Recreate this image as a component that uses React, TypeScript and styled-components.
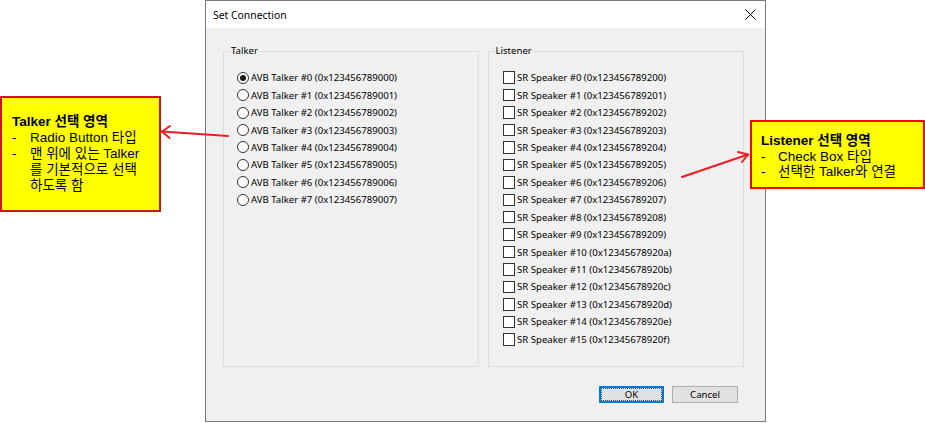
import React from 'react';
import styled, { createGlobalStyle, css } from 'styled-components';

const GlobalStyle = createGlobalStyle`
  html, body {
    margin: 0;
    padding: 0;
    background: #ffffff;
  }
`;

const uiFont = `"Noto Sans", "Liberation Sans", sans-serif`;
const krFont = `"Liberation Sans", "Noto Sans CJK KR", sans-serif`;

const Stage = styled.div`
  position: relative;
  width: 925px;
  height: 423px;
  overflow: hidden;
  background: #ffffff;
`;

const Dialog = styled.div`
  box-sizing: border-box;
  margin-left: 205px;
  width: 561px;
  height: 422px;
  border: 1px solid #7a7a7a;
  background: #f0f0f0;
  display: flex;
  flex-direction: column;
  font-family: ${uiFont};
  color: #000;
`;

const TitleBar = styled.div`
  height: 27px;
  flex: none;
  background: #ffffff;
  display: flex;
  align-items: center;
  justify-content: space-between;
  padding: 0 9px 0 7px;
`;

const Title = styled.span`
  font-size: 10.4px;
`;

const CloseIcon = styled.svg`
  width: 11px;
  height: 11px;
`;

const Body = styled.div`
  flex: 1;
  display: flex;
  flex-direction: column;
  padding: 16px 21px 18px 17px;
`;

const Groups = styled.div`
  display: flex;
  gap: 9px;
  height: 323px;
`;

const Group = styled.fieldset<{ $width: number }>`
  box-sizing: border-box;
  width: ${(p) => p.$width}px;
  margin: 0;
  padding: 0;
  min-width: 0;
  border: 1px solid #dcdcdc;
`;

const Legend = styled.legend`
  font-size: 9.6px;
  line-height: 14px;
  padding: 0 1px;
  margin-left: 6px;
`;

const OptionList = styled.div<{ $indent: number }>`
  display: flex;
  flex-direction: column;
  padding: 11px 0 0 ${(p) => p.$indent}px;
`;

const Option = styled.label`
  display: flex;
  align-items: center;
  gap: 2px;
  height: 17.45px;
  font-size: 9.6px;
  white-space: nowrap;
`;

const Radio = styled.span<{ $checked?: boolean }>`
  box-sizing: border-box;
  width: 12px;
  height: 12px;
  border: 1px solid #333;
  border-radius: 50%;
  background: #fff;
  display: flex;
  align-items: center;
  justify-content: center;
  ${(p) =>
    p.$checked &&
    css`
      &::after {
        content: '';
        width: 6px;
        height: 6px;
        border-radius: 50%;
        background: #1a1a1a;
      }
    `}
`;

const Check = styled.span`
  box-sizing: border-box;
  width: 12.5px;
  height: 12.5px;
  border: 1px solid #333;
  background: #fff;
`;

const ButtonRow = styled.div`
  display: flex;
  justify-content: flex-end;
  gap: 8px;
  margin-top: 19px;
  padding-right: 6px;
`;

const Button = styled.button<{ $primary?: boolean; $width: number }>`
  box-sizing: border-box;
  width: ${(p) => p.$width}px;
  height: 17px;
  padding: 0;
  font-family: ${uiFont};
  font-size: 9.6px;
  color: #000;
  background: #e1e1e1;
  border: 1px solid #adadad;
  ${(p) =>
    p.$primary &&
    css`
      border-color: #0078d7;
      box-shadow: inset 0 0 0 1px #0078d7;
      outline: 1px dotted #2a4f80;
      outline-offset: -3px;
    `}
`;

const Callout = styled.div<{ $left: number; $top: number; $width: number; $height: number; $border: string; $pad: string; $line: number }>`
  position: absolute;
  box-sizing: border-box;
  left: ${(p) => p.$left}px;
  top: ${(p) => p.$top}px;
  width: ${(p) => p.$width}px;
  height: ${(p) => p.$height}px;
  background: #ffff00;
  border: 2px solid ${(p) => p.$border};
  padding: ${(p) => p.$pad};
  font-family: ${krFont};
  font-size: 13.5px;
  line-height: ${(p) => p.$line}px;
  color: #000;
`;

const CalloutTitle = styled.div`
  font-weight: 700;
`;

const Bullet = styled.div<{ $indent: number }>`
  display: flex;
  span:first-child {
    width: ${(p) => p.$indent}px;
    flex: none;
  }
`;

const Arrows = styled.svg`
  position: absolute;
  left: 0;
  top: 0;
  pointer-events: none;
`;

const talkers = Array.from({ length: 8 }, (_, i) => `AVB Talker #${i} (0x12345678900${i})`);
const speakers = Array.from({ length: 16 }, (_, i) => `SR Speaker #${i} (0x12345678920${i.toString(16)})`);

export default function App() {
  return (
    <Stage>
      <GlobalStyle />
      <Dialog>
        <TitleBar>
          <Title>Set Connection</Title>
          <CloseIcon viewBox="0 0 11 11">
            <path d="M0.5 0.5 L10.5 10.5 M10.5 0.5 L0.5 10.5" stroke="#000" strokeWidth="1" fill="none" />
          </CloseIcon>
        </TitleBar>
        <Body>
          <Groups>
            <Group $width={256}>
              <Legend>Talker</Legend>
              <OptionList $indent={13}>
                {talkers.map((t, i) => (
                  <Option key={t}>
                    <Radio $checked={i === 0} />
                    {t}
                  </Option>
                ))}
              </OptionList>
            </Group>
            <Group $width={257}>
              <Legend>Listener</Legend>
              <OptionList $indent={14}>
                {speakers.map((s) => (
                  <Option key={s}>
                    <Check />
                    {s}
                  </Option>
                ))}
              </OptionList>
            </Group>
          </Groups>
          <ButtonRow>
            <Button $primary $width={65}>OK</Button>
            <Button $width={66}>Cancel</Button>
          </ButtonRow>
        </Body>
      </Dialog>

      <Callout $left={0} $top={96} $width={161} $height={116} $border="#c8161d" $pad="16px 2px 0 10px" $line={16}>
        <CalloutTitle>Talker 선택 영역</CalloutTitle>
        <Bullet $indent={18}>
          <span>-</span>
          <span>Radio Button 타입</span>
        </Bullet>
        <Bullet $indent={18}>
          <span>-</span>
          <span>
            맨 위에 있는 Talker
            <br />를 기본적으로 선택
            <br />하도록 함
          </span>
        </Bullet>
      </Callout>

      <Callout $left={750} $top={120} $width={175} $height={69} $border="#ff0000" $pad="11px 2px 0 9px" $line={15.5}>
        <CalloutTitle>Listener 선택 영역</CalloutTitle>
        <Bullet $indent={17}>
          <span>-</span>
          <span>Check Box 타입</span>
        </Bullet>
        <Bullet $indent={17}>
          <span>-</span>
          <span>선택한 Talker와 연결</span>
        </Bullet>
      </Callout>

      <Arrows width="925" height="423" viewBox="0 0 925 423">
        <g stroke="#ee1c24" strokeWidth="2" fill="none" strokeLinecap="round">
          <path d="M228 136 L162 131.5" />
          <path d="M170 126 L162 131.5 L169.5 138" />
          <path d="M682 177 L748 154.5" />
          <path d="M738 152 L748 154.5 L742 162" />
        </g>
      </Arrows>
    </Stage>
  );
}
